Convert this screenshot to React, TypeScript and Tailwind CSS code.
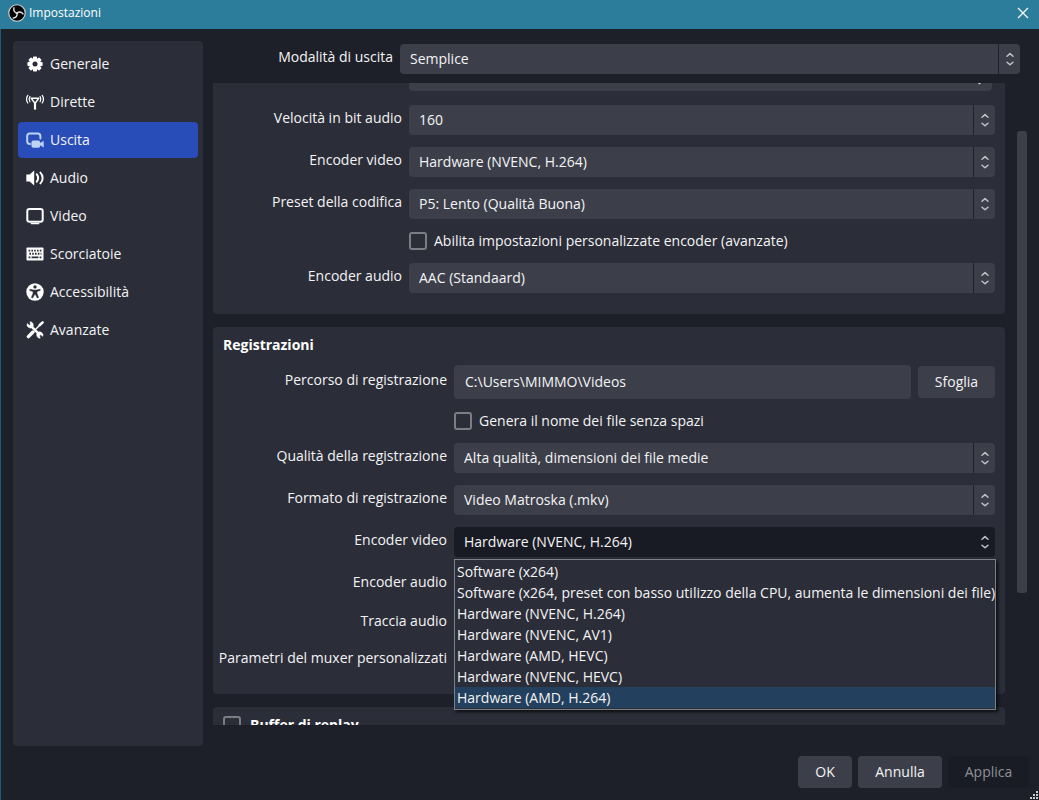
import type { ReactNode } from "react";

const DARK = "#2b2d38";

function LogoIcon() {
  return (
    <svg viewBox="0 0 18 18" className="size-[18px]" aria-hidden="true">
      <circle cx="9" cy="9" r="8.2" fill="#050505" stroke="#d5d8da" strokeWidth="1.1" />
      <g fill="none" stroke="#e2e4e6" strokeWidth="1.4" strokeLinecap="round">
        <path d="M9 9.2C6.6 8.6 5.2 6.4 6 3.8" />
        <path d="M9 9.2C10.8 7.5 13.4 7.5 15 9.9" />
        <path d="M9 9.2C9.6 11.6 8 13.9 5.2 14" />
      </g>
    </svg>
  );
}

function GearIcon() {
  const teeth = [0, 45, 90, 135];
  return (
    <svg viewBox="0 0 18 18" className="size-[18px]" aria-hidden="true">
      {teeth.map((a) => (
        <rect key={a} x="7" y="1.4" width="4" height="15.2" rx="0.8" fill="#fefefe" transform={`rotate(${a} 9 9)`} />
      ))}
      <circle cx="9" cy="9" r="6" fill="#fefefe" />
      <circle cx="9" cy="9" r="2.5" fill={DARK} />
    </svg>
  );
}

function AntennaIcon() {
  return (
    <svg viewBox="0 0 18 18" className="size-[18px]" fill="none" stroke="#fefefe" aria-hidden="true">
      <path d="M5.2 5.2H12.8L9 10.4Z" strokeWidth="1.5" strokeLinejoin="round" />
      <path d="M9 9V16.6" strokeWidth="2.2" />
      <path d="M3.9 3.6C2.9 5.2 2.9 7.2 3.9 8.8M14.1 3.6C15.1 5.2 15.1 7.2 14.1 8.8" strokeWidth="1.2" strokeLinecap="round" />
      <path d="M1.8 2.4C0.2 4.8 0.2 7.6 1.8 10M16.2 2.4C17.8 4.8 17.8 7.6 16.2 10" strokeWidth="1.2" strokeLinecap="round" />
    </svg>
  );
}

function OutputIcon() {
  return (
    <svg viewBox="0 0 18 18" className="size-[18px]" aria-hidden="true">
      <path d="M4 12.9H3.8Q1.2 12.9 1.2 10.3V5Q1.2 2.4 3.8 2.4H11.8Q14.4 2.4 14.4 5V7.4" fill="none" stroke="#bcd3f6" strokeWidth="2" strokeLinecap="round" />
      <rect x="5.4" y="9.4" width="8.8" height="7.4" rx="2" fill="#bcd3f6" />
      <path d="M13.8 12.4L17.4 10.4V16L13.8 13.8Z" fill="#bcd3f6" stroke="#bcd3f6" strokeWidth="0.6" strokeLinejoin="round" />
    </svg>
  );
}

function AudioIcon() {
  return (
    <svg viewBox="0 0 18 18" className="size-[18px]" aria-hidden="true">
      <path d="M0.3 5.6H3.6L8.2 1.6V16.4L3.6 12.4H0.3Z" fill="#fefefe" />
      <g fill="none" stroke="#fefefe" strokeWidth="2" strokeLinecap="round">
        <path d="M10.8 5.4C12.3 7.4 12.3 10.6 10.8 12.6" />
        <path d="M14.4 3.6C17.4 6.6 17.4 11.4 14.4 14.4" />
      </g>
    </svg>
  );
}

function VideoIcon() {
  return (
    <svg viewBox="0 0 18 18" className="size-[18px]" aria-hidden="true">
      <rect x="1.3" y="2.1" width="15.4" height="12.6" rx="2.2" fill="none" stroke="#fefefe" strokeWidth="2" />
      <path d="M5.2 16.6H12.8" stroke="#fefefe" strokeWidth="1.3" strokeLinecap="round" />
    </svg>
  );
}

function KeyboardIcon() {
  return (
    <svg viewBox="0 0 18 18" className="size-[18px]" aria-hidden="true">
      <rect x="0.5" y="2.4" width="17" height="13.2" rx="0.8" fill="#fefefe" />
      <path d="M2.6 5.6H15.6" stroke={DARK} strokeWidth="1.9" strokeDasharray="1.6 1.2" />
      <path d="M3.4 8.8H15.4" stroke={DARK} strokeWidth="1.9" strokeDasharray="1.6 1.2" />
      <path d="M2.6 12.3H4.4M5.6 12.3H12.4M13.6 12.3H15.4" stroke={DARK} strokeWidth="1.8" />
    </svg>
  );
}

function AccessibilityIcon() {
  return (
    <svg viewBox="0 0 18 18" className="size-[18px]" aria-hidden="true">
      <circle cx="9" cy="9" r="8.7" fill="#fefefe" />
      <circle cx="9" cy="3.9" r="1.7" fill={DARK} />
      <path d="M3.8 6.3L7.6 7H10.4L14.2 6.3V7.5L11 8.4V10.4L12.6 14.6L11.3 15.1L9.4 11.4H8.6L6.7 15.1L5.4 14.6L7 10.4V8.4L3.8 7.5Z" fill={DARK} stroke={DARK} strokeWidth="0.5" strokeLinejoin="round" />
    </svg>
  );
}

function ToolsIcon() {
  return (
    <svg viewBox="0 0 18 18" className="size-[18px]" aria-hidden="true">
      <path d="M4.4 4.4L13.8 13.8" stroke="#fefefe" strokeWidth="2.4" />
      <path d="M1.2 2.6A3.4 3.4 0 0 0 6.4 6.4A3.4 3.4 0 0 0 4 0.7L4.5 3.2L3.4 4.3Z" fill="#fefefe" stroke="#fefefe" strokeWidth="0.6" />
      <path d="M16.9 15.3A3.4 3.4 0 0 0 11.6 11.6A3.4 3.4 0 0 0 14.1 17.3L13.6 14.8L14.7 13.7Z" fill="#fefefe" stroke="#fefefe" strokeWidth="0.6" />
      <path d="M16.4 1.6L10 8" stroke={DARK} strokeWidth="3.4" />
      <path d="M16.9 1.1L9.2 8.8" stroke="#fefefe" strokeWidth="1.4" strokeLinecap="round" />
      <path d="M16.4 1.6L13.8 4" stroke="#fefefe" strokeWidth="2.6" strokeLinecap="round" />
      <path d="M7 11L2.4 15.6" stroke="#fefefe" strokeWidth="3.4" strokeLinecap="round" />
    </svg>
  );
}

const navItems: { label: string; icon: ReactNode }[] = [
  { label: "Generale", icon: <GearIcon /> },
  { label: "Dirette", icon: <AntennaIcon /> },
  { label: "Uscita", icon: <OutputIcon /> },
  { label: "Audio", icon: <AudioIcon /> },
  { label: "Video", icon: <VideoIcon /> },
  { label: "Scorciatoie", icon: <KeyboardIcon /> },
  { label: "Accessibilità", icon: <AccessibilityIcon /> },
  { label: "Avanzate", icon: <ToolsIcon /> },
];

function Chevrons() {
  return (
    <svg viewBox="0 0 10 16" className="h-4 w-[10px]" fill="none" stroke="#c2c3c8" strokeWidth="1.5" strokeLinecap="round" strokeLinejoin="round" aria-hidden="true">
      <path d="M2 5.2L5 2.6L8 5.2" />
      <path d="M2 11.2L5 13.8L8 11.2" />
    </svg>
  );
}

function SelectBox({ id, value, open = false }: { id: string; value: string; open?: boolean }) {
  return (
    <div className="relative min-w-0 flex-1">
      <select
        id={id}
        defaultValue={value}
        className={`block h-[30px] w-full appearance-none rounded-[4px] pr-7 pl-[10px] text-sm text-[#f4f4f5] outline-none ${open ? "bg-[#181a24]" : "bg-[#3c3f4a]"}`}
      >
        <option>{value}</option>
      </select>
      <span
        className={`pointer-events-none absolute inset-y-0 right-0 flex w-[22px] items-center justify-center border-l ${open ? "border-transparent" : "border-[#20222b]"}`}
      >
        <Chevrons />
      </span>
    </div>
  );
}

function Row({ label, htmlFor, wide = false, size = "h-[30px]", children }: {
  label?: string;
  htmlFor?: string;
  wide?: boolean;
  size?: string;
  children?: ReactNode;
}) {
  return (
    <div className={`flex items-center gap-[7px] ${size}`}>
      <div className={`flex shrink-0 justify-end pb-1 whitespace-nowrap ${wide ? "w-[224px]" : "w-[179px]"}`}>
        {label && <label htmlFor={htmlFor}>{label}</label>}
      </div>
      {children}
    </div>
  );
}

function CheckBox({ id, label, bold = false }: { id: string; label: string; bold?: boolean }) {
  return (
    <div className="flex items-center gap-[7px]">
      <input
        id={id}
        type="checkbox"
        className="size-[18px] shrink-0 appearance-none rounded-[3px] border-2 border-[#7d7e84] checked:bg-[#284cb8]"
      />
      <label htmlFor={id} className={bold ? "pl-[2px] font-bold text-white" : ""}>{label}</label>
    </div>
  );
}

const encoders = [
  "Software (x264)",
  "Software (x264, preset con basso utilizzo della CPU, aumenta le dimensioni dei file)",
  "Hardware (NVENC, H.264)",
  "Hardware (NVENC, AV1)",
  "Hardware (AMD, HEVC)",
  "Hardware (NVENC, HEVC)",
  "Hardware (AMD, H.264)",
];

function EncoderPopup() {
  return (
    <ul
      role="listbox"
      aria-label="Encoder video"
      className="absolute top-8 -right-px left-0 z-10 border border-[#7d818a] bg-[#2b2d38] py-px shadow-[2px_2px_3px_rgba(0,0,0,0.7)]"
    >
      {encoders.map((name, i) => {
        const active = i === encoders.length - 1;
        return (
          <li
            key={name}
            role="option"
            aria-selected={active}
            className={`h-[21px] pl-[2px] leading-[21px] whitespace-nowrap ${active ? "bg-[#23405e]" : ""}`}
          >
            {name}
          </li>
        );
      })}
    </ul>
  );
}

export default function App() {
  return (
    <div className="flex h-screen flex-col overflow-hidden bg-[#1e2029] font-['Open_Sans','Noto_Sans',sans-serif] text-sm leading-5 text-[#f4f4f5]">
      <header className="flex h-[29px] shrink-0 items-center justify-between bg-[#2c7d9b] pr-[10px] pb-[3px] pl-2">
        <div className="flex items-center gap-[3px]">
          <LogoIcon />
          <h1 className="text-xs text-white">Impostazioni</h1>
        </div>
        <button type="button" aria-label="Chiudi" className="flex size-3 items-center justify-center">
          <svg viewBox="0 0 12 12" className="size-3" stroke="#f5f8fa" strokeWidth="1.3" aria-hidden="true">
            <path d="M1 1L11 11M11 1L1 11" />
          </svg>
        </button>
      </header>

      <div className="relative flex min-h-0 flex-1 flex-col border-l border-[#1c5c78] pt-3">
        <div className="flex min-h-0 flex-1">
          <nav className="ml-3 flex w-[190px] shrink-0 flex-col gap-[2px] rounded-[4px] bg-[#2b2d38] p-[5px]">
            {navItems.map(({ label, icon }) => (
              <button
                key={label}
                type="button"
                className={`flex h-9 items-center gap-[6px] rounded-[4px] pl-2 text-left ${label === "Uscita" ? "bg-[#284cb8]" : ""}`}
              >
                {icon}
                <span>{label}</span>
              </button>
            ))}
          </nav>

          <main className="ml-[10px] flex min-w-0 flex-1 flex-col pt-[3px] pb-[21px]">
            <div className="mr-[19px] flex items-center gap-[7px]">
              <label htmlFor="mode" className="w-[180px] shrink-0 pb-1 text-right">Modalità di uscita</label>
              <SelectBox id="mode" value="Semplice" />
            </div>

            <div className="mt-[9px] flex min-h-0 flex-1">
              <div className="flex min-w-0 flex-1 flex-col gap-[13px] overflow-hidden">
                <section className="-mt-[22px] flex shrink-0 flex-col gap-3 rounded-[4px] bg-[#2b2d38] px-[10px] pb-[21px]">
                  <Row size="mb-[2px] h-[30px]">
                    <div className="mr-[3px] flex h-[30px] flex-1 items-end justify-end rounded-[4px] bg-[#3c3f4a] pr-[10px] pb-[6px]">
                      <svg viewBox="0 0 5 3" className="h-[3px] w-[5px]" fill="#e4e5e8" aria-hidden="true">
                        <path d="M0 0H5L2.5 2.6Z" />
                      </svg>
                    </div>
                  </Row>
                  <Row label="Velocità in bit audio" htmlFor="abr"><SelectBox id="abr" value="160" /></Row>
                  <Row label="Encoder video" htmlFor="venc"><SelectBox id="venc" value="Hardware (NVENC, H.264)" /></Row>
                  <Row label="Preset della codifica" htmlFor="preset"><SelectBox id="preset" value="P5: Lento (Qualità Buona)" /></Row>
                  <Row size="h-5"><CheckBox id="custom" label="Abilita impostazioni personalizzate encoder (avanzate)" /></Row>
                  <Row label="Encoder audio" htmlFor="aenc"><SelectBox id="aenc" value="AAC (Standaard)" /></Row>
                </section>

                <section className="flex shrink-0 flex-col gap-3 rounded-[4px] bg-[#2b2d38] px-[10px] pt-2 pb-[21px]">
                  <h2 className="-mb-[2px] font-bold text-white">Registrazioni</h2>
                  <Row wide label="Percorso di registrazione" htmlFor="path" size="h-[34px]">
                    <input
                      id="path"
                      type="text"
                      defaultValue="C:\Users\MIMMO\Videos"
                      className="h-[34px] min-w-0 flex-1 rounded-[4px] bg-[#3c3f4a] px-[11px] pb-[2px] outline-none"
                    />
                    <button type="button" className="h-8 w-[77px] rounded-[4px] bg-[#3c3f4a]">Sfoglia</button>
                  </Row>
                  <Row wide size="h-5"><CheckBox id="nospace" label="Genera il nome dei file senza spazi" /></Row>
                  <Row wide label="Qualità della registrazione" htmlFor="quality"><SelectBox id="quality" value="Alta qualità, dimensioni dei file medie" /></Row>
                  <Row wide label="Formato di registrazione" htmlFor="format"><SelectBox id="format" value="Video Matroska (.mkv)" /></Row>
                  <Row wide label="Encoder video" htmlFor="rvenc">
                    <div className="relative flex min-w-0 flex-1">
                      <SelectBox id="rvenc" value="Hardware (NVENC, H.264)" open />
                      <EncoderPopup />
                    </div>
                  </Row>
                  <Row wide label="Encoder audio" />
                  <Row wide label="Traccia audio" size="h-6" />
                  <Row wide label="Parametri del muxer personalizzati" size="h-[26px]" />
                </section>

                <section className="shrink-0 rounded-[4px] bg-[#2b2d38] px-[10px] pt-2 pb-3">
                  <CheckBox id="replay" label="Buffer di replay" bold />
                </section>
              </div>
              <div className="w-[34px] shrink-0 pt-12 pl-3">
                <div className="h-[462px] w-[10px] rounded-[3px] bg-[#3c3f4a]" />
              </div>
            </div>
          </main>
        </div>

        <footer className="flex shrink-0 justify-end gap-[6px] pt-[10px] pr-[10px] pb-3">
          <button type="button" className="h-8 w-[54px] rounded-[4px] bg-[#3c3f4a]">OK</button>
          <button type="button" className="h-8 w-[84px] rounded-[4px] bg-[#3c3f4a]">Annulla</button>
          <button type="button" disabled className="h-8 w-[81px] rounded-[4px] bg-[#191b25] text-[#8f9095]">Applica</button>
        </footer>

        <svg viewBox="0 0 10 10" className="absolute right-0 bottom-0 size-[10px]" fill="#c9cacd" aria-hidden="true">
          <path d="M7 1h2v2H7zM4 4h2v2H4zM7 4h2v2H7zM1 7h2v2H1zM4 7h2v2H4zM7 7h2v2H7z" />
        </svg>
      </div>
    </div>
  );
}
